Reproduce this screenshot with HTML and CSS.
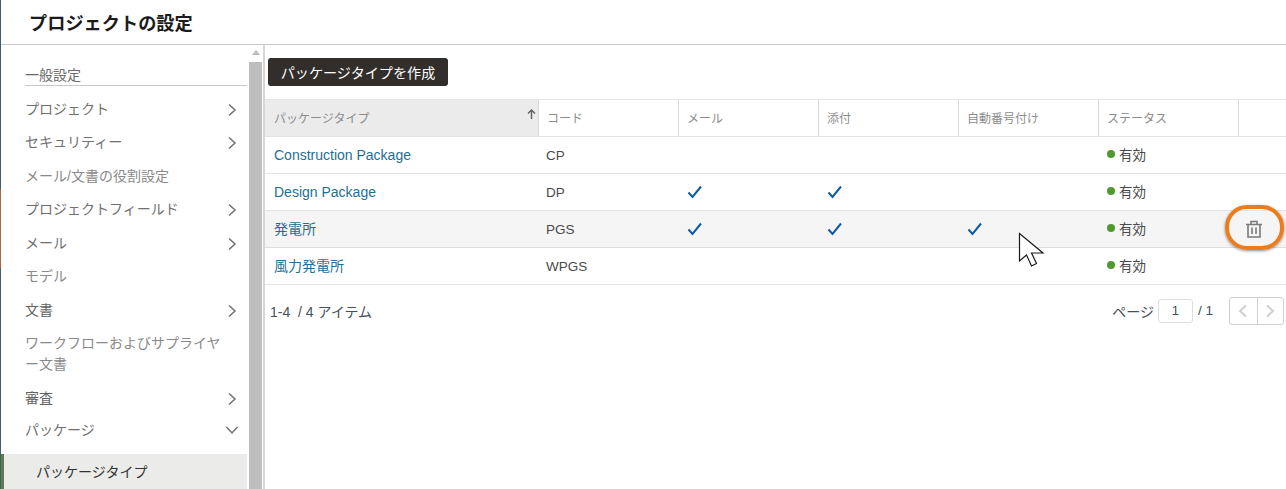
FILE: index.html
```html
<!DOCTYPE html>
<html lang="ja">
<head>
<meta charset="utf-8">
<title>プロジェクトの設定</title>
<link rel="stylesheet" href="styles.css">
</head>
<body>
<div class="app">
  <div class="edge"><i class="edge-a"></i><i class="edge-b"></i><i class="edge-c"></i></div>
  <div class="main">
    <header class="title-bar"><h1>プロジェクトの設定</h1></header>
    <div class="body">
      <nav class="side">
        <div class="side-head">一般設定</div>
        <a class="nav h33 first">プロジェクト<svg class="chev" viewBox="0 0 10 14"><path d="M2 1.500 8 7l-6 5.500"/></svg></a>
        <a class="nav h33">セキュリティー<svg class="chev" viewBox="0 0 10 14"><path d="M2 1.500 8 7l-6 5.500"/></svg></a>
        <a class="nav h34 light">メール/文書の役割設定</a>
        <a class="nav h33">プロジェクトフィールド<svg class="chev" viewBox="0 0 10 14"><path d="M2 1.500 8 7l-6 5.500"/></svg></a>
        <a class="nav h33">メール<svg class="chev" viewBox="0 0 10 14"><path d="M2 1.500 8 7l-6 5.500"/></svg></a>
        <a class="nav h34 light">モデル</a>
        <a class="nav h34 dark">文書<svg class="chev" viewBox="0 0 10 14"><path d="M2 1.500 8 7l-6 5.500"/></svg></a>
        <a class="nav multi light">ワークフローおよびサプライヤー文書</a>
        <a class="nav h33 dark">審査<svg class="chev" viewBox="0 0 10 14"><path d="M2 1.500 8 7l-6 5.500"/></svg></a>
        <a class="nav h30">パッケージ<svg class="chev-d" viewBox="0 0 14 10"><path d="M1.500 2 7 8l5.500-6"/></svg></a>
        <a class="nav-active">パッケージタイプ</a>
      </nav>
      <div class="scroll"><div class="scroll-arrow"></div><div class="thumb"></div></div>
      <section class="content">
        <button class="create">パッケージタイプを作成</button>
        <div class="table">
          <div class="row head">
            <div class="c c1 sorted">パッケージタイプ<svg class="arrow" viewBox="0 0 9 10"><path d="M4.500 10V1M1 4.500 4.500 1 8 4.500"/></svg></div>
            <div class="c">コード</div><div class="c">メール</div><div class="c">添付</div><div class="c">自動番号付け</div><div class="c">ステータス</div><div class="c"></div>
          </div>
          <div class="row">
            <div class="c c1"><a class="link">Construction Package</a></div><div class="c code">CP</div><div class="c"></div><div class="c"></div><div class="c"></div>
            <div class="c jp"><i class="dot"></i>有効</div><div class="c"></div>
          </div>
          <div class="row">
            <div class="c c1"><a class="link">Design Package</a></div><div class="c code">DP</div>
            <div class="c"><svg class="check" viewBox="0 0 16 14"><path d="M1.500 7.500 5.500 12 14 1.500"/></svg></div>
            <div class="c"><svg class="check" viewBox="0 0 16 14"><path d="M1.500 7.500 5.500 12 14 1.500"/></svg></div><div class="c"></div>
            <div class="c jp"><i class="dot"></i>有効</div><div class="c"></div>
          </div>
          <div class="row hover">
            <div class="c c1 jp"><a class="link">発電所</a></div><div class="c code">PGS</div>
            <div class="c"><svg class="check" viewBox="0 0 16 14"><path d="M1.500 7.500 5.500 12 14 1.500"/></svg></div>
            <div class="c"><svg class="check" viewBox="0 0 16 14"><path d="M1.500 7.500 5.500 12 14 1.500"/></svg></div>
            <div class="c"><svg class="check" viewBox="0 0 16 14"><path d="M1.500 7.500 5.500 12 14 1.500"/></svg></div>
            <div class="c jp"><i class="dot"></i>有効</div>
            <div class="c trash-cell">
              <svg class="trash" viewBox="0 0 18 18"><path d="M1 4.500h16M6 4.500V1.500h6v3M3 4.500V17h12V4.500M7 7.500v6.500M11 7.500v6.500"/></svg>
            </div>
          </div>
          <div class="row">
            <div class="c c1 jp"><a class="link">風力発電所</a></div><div class="c code">WPGS</div><div class="c"></div><div class="c"></div><div class="c"></div>
            <div class="c jp"><i class="dot"></i>有効</div><div class="c"></div>
          </div>
        </div>
        <div class="pager">
          <span class="count">1-4&nbsp; / 4 アイテム</span>
          <div class="pages">
            <span>ページ</span><span class="page-box">1</span><span class="total">/ 1</span>
            <div class="btns">
              <span class="btn"><svg viewBox="0 0 10 14"><path d="M8 1.500 2 7l6 5.500"/></svg></span>
              <span class="btn"><svg viewBox="0 0 10 14"><path d="M2 1.500 8 7l-6 5.500"/></svg></span>
            </div>
          </div>
        </div>
      </section>
    </div>
  </div>
</div>
<div class="ring"></div>
<svg class="cursor" viewBox="0 0 28 36"><path d="M1.500 1.500V29l7-6 5 11 5-2.500-5-10.500H25Z"/></svg>
</body>
</html>
```

FILE: styles.css
```css
* { box-sizing: border-box; }
html, body { margin: 0; height: 489px; overflow: hidden; background: #fff; }
body { font-family: "Liberation Sans", "Noto Sans CJK JP", sans-serif; font-size: 14px; color: #4a4a4a; }
.app { display: flex; height: 489px; }
.edge { width: 1px; flex: none; display: flex; flex-direction: column; }
.edge-a { height: 189px; background: #3f5f69; }
.edge-b { height: 79px; background: #b0663f; }
.edge-c { flex: 1; background: #3f5f69; }
.main { flex: 1; min-width: 0; display: flex; flex-direction: column; }
.title-bar { height: 45px; flex: none; border-bottom: 1px solid #c9c9c9; padding-left: 28px; display: flex; align-items: center; }
h1 { margin: 0 0 1px; font-size: 18.200px; font-weight: 700; color: #1c1c1c; }
.body { flex: 1; display: flex; min-height: 0; }
.side { width: 246px; flex: none; padding: 20px 0 0; overflow: hidden; color: #6e6e6e; }
.side-head { margin-left: 24px; height: 21px; border-bottom: 1px solid #c9c9c9; font-size: 14px; line-height: 20px; color: #6a6a6a; }
.nav { display: flex; align-items: center; justify-content: space-between; padding: 0 10px 0 24px; font-size: 14px; color: #707070; }
.first { margin-top: 5px; }
.h33 { height: 33.400px; }
.h34 { height: 33.700px; }
.h30 { height: 30px; margin-bottom: 10px; }
.light { color: #8a8a8a; }
.dark { color: #636363; }
.multi { display: block; height: 55px; line-height: 21px; padding: 7px 22px 0 24px; }
.chev { width: 10px; height: 14px; margin-top: 4px; }
.chev-d { width: 14px; height: 10px; margin-right: -2px; margin-top: 2px; }
.chev path, .chev-d path { fill: none; stroke: #707070; stroke-width: 1.500; }
.nav-active { display: flex; align-items: center; height: 35px; margin-left: 3px; padding: 0 0 2px 32px; background: #ebebe9; color: #333; font-size: 14px; box-shadow: -3px 0 0 #5d7d4f; width: 243px; }
.scroll { width: 18px; flex: none; border-right: 2px solid #d6d6d6; display: flex; flex-direction: column; padding: 0 1px 0 2px; background: #fff; }
.scroll-arrow { height: 17px; position: relative; flex: none; }
.scroll-arrow::after { content: ""; position: absolute; left: 3px; top: 5px; border: 4px solid transparent; border-top: 0; border-bottom: 5px solid #bdbdbd; }
.thumb { flex: 1; background: #bebebe; }
.content { flex: 1; min-width: 0; display: flex; flex-direction: column; padding-top: 13px; }
.create { align-self: flex-start; margin-left: 3px; height: 28px; width: 180px; border: 0; border-radius: 3px; background: #322e2b; color: #fff; font: 14.100px "Liberation Sans", "Noto Sans CJK JP", sans-serif; padding: 0; }
.table { margin-top: 13px; border-top: 1px solid #e4e4e4; }
.row { display: grid; grid-template-columns: 274px 140px 140px 140px 140px 140px 47px; height: 37px; border-bottom: 1px solid #e4e4e4; align-items: center; }
.row.hover { background: #f5f5f5; border-bottom-color: #dedede; }
.row .c { height: 100%; display: flex; align-items: center; padding-left: 8px; color: #4a4a4a; font-size: 13.500px; }
.row .c1 { padding-left: 9px; }
.row .code { padding-left: 7px; }
.row .jp { padding-bottom: 2px; }
.row.head .c { border-right: 1px solid #d9d9d9; color: #8c8c8c; font-size: 12px; padding-bottom: 2px; }
.row.head .c:last-child { border-right: 0; }
.head .sorted { background: #ebebeb; position: relative; }
.arrow { position: absolute; right: 2px; top: 9px; width: 9px; height: 10px; }
.arrow path { fill: none; stroke: #666; stroke-width: 1.500; }
.link { color: #1f6f94; font-size: 14px; }
.dot { width: 8px; height: 8px; border-radius: 50%; background: #4e9a2e; margin-right: 4px; flex: none; }
.check { width: 16px; height: 14px; }
.check path { fill: none; stroke: #0f5aa8; stroke-width: 2; }
.row .trash-cell { padding-left: 6px; }
.trash { width: 18px; height: 18px; }
.trash path { fill: none; stroke: #7a7a7a; stroke-width: 1.600; }
.pager { display: flex; justify-content: space-between; align-items: center; height: 51px; padding-left: 5px; padding-right: 2px; }
.count { font-size: 14px; color: #44505a; }
.pages { display: flex; align-items: center; font-size: 14px; color: #44505a; }
.page-box { width: 35px; height: 24px; border: 1px solid #dedede; border-radius: 3px; margin-left: 4px; display: flex; align-items: center; justify-content: center; font-size: 13px; }
.total { margin-left: 5px; font-size: 13.500px; }
.btns { display: flex; margin-left: 16px; border: 1px solid #cfcfcf; border-radius: 3px; height: 28px; }
.btn { width: 26.500px; display: flex; align-items: center; justify-content: center; }
.btn + .btn { border-left: 1px solid #cfcfcf; }
.btn svg { width: 10px; height: 14px; }
.btn path { fill: none; stroke: #cfcfcf; stroke-width: 2; }
.ring { position: absolute; left: 1225px; top: 205px; width: 59px; height: 45px; border: 4.500px solid #ee7b1c; border-radius: 22px; box-shadow: 0 1px 3px rgba(0,0,0,.45); }
.cursor { position: absolute; left: 1018px; top: 232px; width: 28px; height: 36px; }
.cursor path { fill: #fff; stroke: #1a1a1a; stroke-width: 1.200; }
```
